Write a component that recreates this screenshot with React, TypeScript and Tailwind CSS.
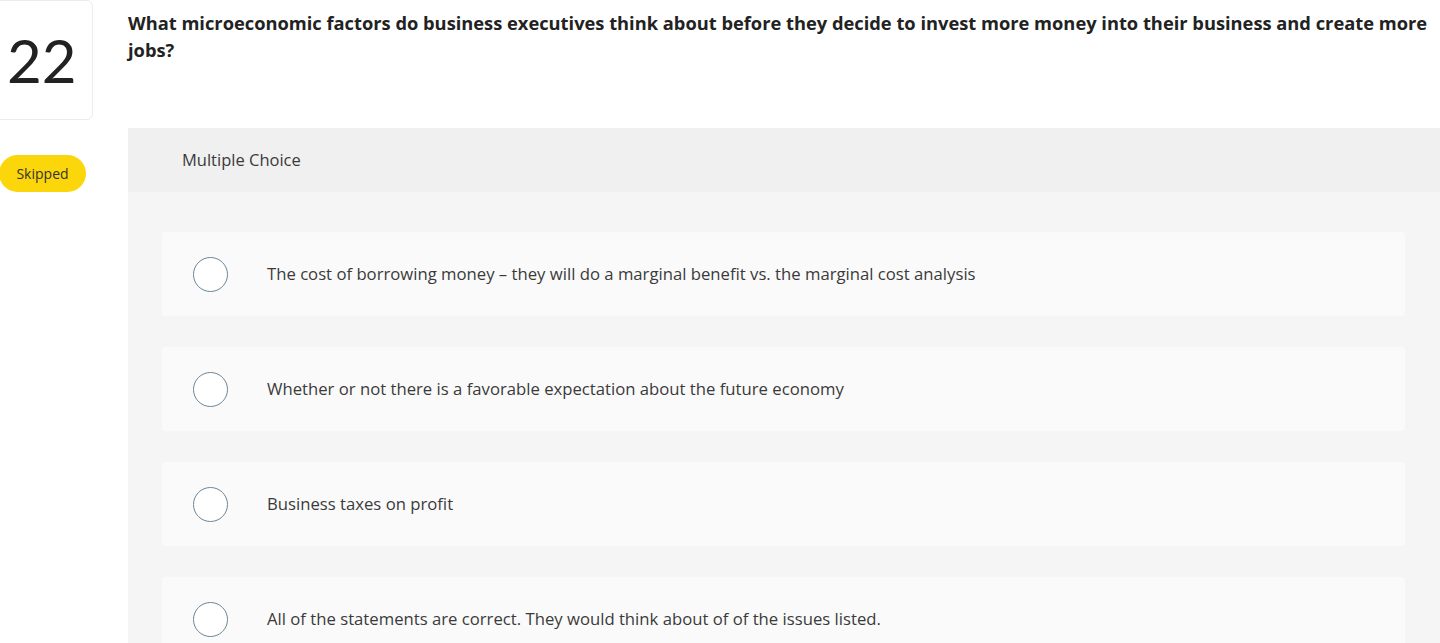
const options = [
  'The cost of borrowing money – they will do a marginal benefit vs. the marginal cost analysis',
  'Whether or not there is a favorable expectation about the future economy',
  'Business taxes on profit',
  'All of the statements are correct. They would think about of of the issues listed.',
]

export default function App() {
  return (
    <div className="h-[643px] overflow-hidden bg-white flex font-['Open_Sans',sans-serif] text-[#333]">
      {/* Left rail */}
      <div className="w-[128px] shrink-0 flex flex-col">
        <div className="w-[94px] h-[120px] -ml-px border border-[#ececec] rounded-r-md flex items-center pl-[7px] shrink-0">
          <span className="font-['Lato',sans-serif] text-[60px] leading-none font-normal text-[#222]">22</span>
        </div>
        <div className="mt-[35px] w-[87px] h-[37px] rounded-full -ml-px bg-[#fad60a] flex items-center justify-center shrink-0">
          <span className="text-[14px] text-[#333]">Skipped</span>
        </div>
      </div>

      {/* Question */}
      <div className="flex-1 flex flex-col min-w-0">
        <h1 className="shrink-0 h-[128px] pt-[9px] pr-2 text-[18.3px] leading-[27px] font-bold text-[#222]">
          What microeconomic factors do business executives think about before they decide to invest more money into their business and create more jobs?
        </h1>
        <div className="bg-[#f5f5f5] flex-1">
          <div className="bg-[#f0f0f0] h-[64px] flex items-center pl-[54px]">
            <span className="text-[16.5px] text-[#3a3a3a]">Multiple Choice</span>
          </div>
          <div className="pt-[40px] pl-[34px] pr-[35px] flex flex-col gap-[31px]">
            {options.map((o, i) => (
              <div key={i} className="h-[84px] bg-[#fafafa] rounded-sm flex items-center pl-[31px] shrink-0">
                <span className="w-[35px] h-[35px] rounded-full border-[1.5px] border-[#6a8699] bg-white shrink-0" />
                <span className="ml-[39px] text-[16.7px] text-[#3a3a3a]">{o}</span>
              </div>
            ))}
          </div>
        </div>
      </div>
    </div>
  )
}
